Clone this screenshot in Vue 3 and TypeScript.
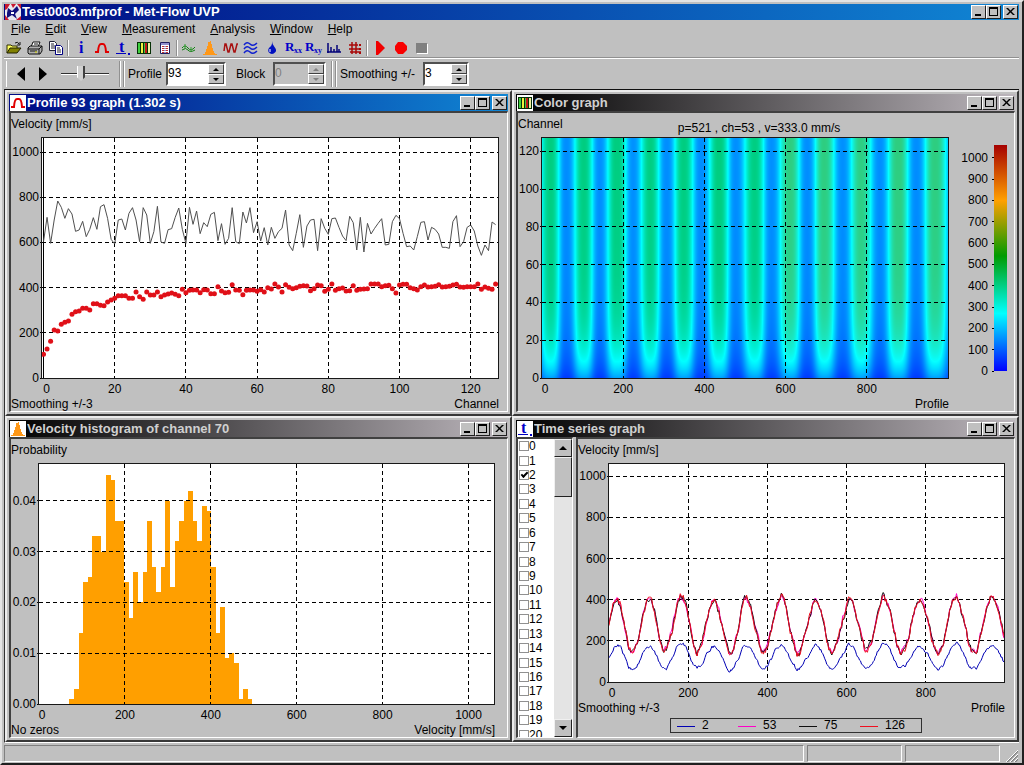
<script setup lang="ts">
import { onMounted, ref } from 'vue'

interface Tick { value: number; label: string }
interface Chart {
  kind: 'profile' | 'color' | 'histogram' | 'time'
  title: string
  icon: string
  active?: boolean
  yTitle: string
  xTitle: string
  note: string
  w: number
  h: number
  x0: number
  kx: number
  ky: number
  xTicks: Tick[]
  yTicks: Tick[]
}

const ticks = (step: number, count: number, digits = 0): Tick[] =>
  Array.from({ length: count }, (_, i) => ({ value: i * step, label: (i * step).toFixed(digits) }))

const charts: Chart[] = [
  { kind: 'profile', title: 'Profile 93 graph (1.302 s)', icon: 'profile', active: true, yTitle: 'Velocity [mm/s]', xTitle: 'Channel', note: 'Smoothing +/-3', w: 456, h: 240, x0: 1.5, kx: 3.56, ky: 0.226, xTicks: ticks(20, 7), yTicks: ticks(200, 6) },
  { kind: 'color', title: 'Color graph', icon: 'color', yTitle: 'Channel', xTitle: 'Profile', note: '', w: 406, h: 240, x0: 0, kx: 0.406, ky: 1.89, xTicks: ticks(200, 5), yTicks: ticks(20, 7) },
  { kind: 'histogram', title: 'Velocity histogram of channel 70', icon: 'hist', yTitle: 'Probability', xTitle: 'Velocity [mm/s]', note: 'No zeros', w: 455, h: 240, x0: 0, kx: 0.4295, ky: 5080, xTicks: ticks(200, 6), yTicks: ticks(0.01, 5, 2) },
  { kind: 'time', title: 'Time series graph', icon: 'time', yTitle: 'Velocity [mm/s]', xTitle: 'Profile', note: 'Smoothing +/-3', w: 395, h: 218, x0: 0, kx: 0.396, ky: 0.2058, xTicks: ticks(200, 5), yTicks: ticks(200, 6) },
]

const px = (c: Chart, v: number) => c.x0 + v * c.kx
const py = (c: Chart, v: number) => c.h - v * c.ky
const xPct = (c: Chart, v: number) => `${(px(c, v) / c.w) * 100}%`
const yPct = (c: Chart, v: number) => `${(py(c, v) / c.h) * 100}%`

/* Raw and averaged velocity per channel, as offsets in thirds of a display unit from the plot top */
const rawProfile = [335, 262, 340, 270, 213, 232, 265, 236, 252, 304, 300, 274, 320, 298, 263, 298, 230, 224, 265, 328, 342, 270, 267, 300, 250, 233, 270, 335, 233, 255, 340, 305, 229, 336, 340, 299, 296, 262, 234, 298, 340, 232, 283, 243, 311, 278, 290, 253, 247, 332, 281, 343, 325, 233, 335, 341, 246, 279, 233, 308, 275, 333, 293, 345, 292, 325, 305, 295, 240, 345, 362, 310, 254, 352, 288, 270, 268, 362, 266, 295, 313, 266, 264, 292, 318, 332, 259, 278, 360, 262, 366, 280, 312, 295, 280, 266, 345, 343, 275, 256, 266, 310, 350, 348, 360, 320, 277, 275, 330, 292, 298, 312, 352, 352, 355, 275, 257, 350, 335, 292, 285, 303, 348, 376, 345, 362, 276, 284]
const meanProfile = [673, 657, 634, 600, 603, 583, 577, 573, 553, 545, 543, 535, 535, 540, 521, 521, 526, 527, 516, 510, 505, 497, 497, 497, 505, 505, 486, 500, 508, 486, 495, 495, 486, 500, 495, 492, 489, 493, 497, 478, 488, 481, 480, 480, 488, 479, 480, 491, 491, 470, 483, 488, 487, 464, 480, 481, 494, 481, 480, 480, 484, 479, 486, 473, 477, 462, 471, 486, 464, 472, 476, 473, 469, 467, 468, 482, 476, 465, 467, 484, 478, 462, 481, 476, 474, 483, 482, 467, 481, 478, 477, 476, 462, 462, 462, 470, 467, 466, 476, 489, 465, 463, 463, 473, 476, 480, 470, 465, 471, 470, 469, 464, 471, 470, 469, 465, 463, 471, 472, 470, 470, 470, 462, 478, 471, 475, 478, 462]
const toPlot = (v: number) => v / 3 - 8
const rawPoints = rawProfile.map((v, i) => `${px(charts[0], i)},${toPlot(v)}`).join(' ')
const meanPoints = meanProfile.map((v, i) => ({ x: xPct(charts[0], i), y: `${(toPlot(v) / 240) * 100}%` }))

/* Histogram counts per thousand */
const counts = [1, 3, 14, 24, 25, 33, 33, 30, 45, 44, 36, 36, 24, 17, 26, 20, 26, 36, 27, 22, 27, 40, 23, 32, 36, 40, 42, 36, 32, 39, 38, 27, 14, 19, 9, 10, 8, 1, 3, 1]
const histogramPath = (() => {
  const c = charts[2]
  let d = `M${px(c, 71)},${c.h}`
  counts.forEach((n, i) => {
    const y = py(c, n / 1000)
    d += `L${px(c, 71 + i * 10.64)},${y}L${px(c, 71 + (i + 1) * 10.64)},${y}`
  })
  return `${d}L${px(c, 71 + counts.length * 10.64)},${c.h}Z`
})()

/* Oscillation extrema: [profile, level], level 0 = trough, 1 = crest */
const extrema: [number, number][] = [[-24, 0], [20, 1], [59, 0], [102, 1], [141, 0.03], [184, 1.04], [223, 0.04], [266, 0.98], [306, 0], [348, 1], [391, 0], [435, 1.03], [476, 0.02], [523, 0.98], [564, 0.03], [610, 1], [652, 0.01], [694, 1], [739, 0.03], [785, 0.97], [831, 0.02], [876, 1.03], [921, 0], [967, 1.01], [1015, 0.05]]
const wave = (p: number) => {
  let i = 0
  while (i < extrema.length - 2 && extrema[i + 1][0] <= p) i++
  const [a, u] = extrema[i]
  const [b, v] = extrema[i + 1]
  const t = (p - a) / (b - a)
  const s = 0.85 * (0.5 - 0.5 * Math.cos(Math.PI * t)) + 0.15 * t
  return u + (v - u) * s
}
const noise = (seed: number) => {
  let s = seed
  return () => {
    s = (s * 16807) % 2147483647
    return s / 2147483647 - 0.5
  }
}
const line = (seed: number, low: number, high: number, jitter: number, own: number) => {
  const common = noise(5150)
  const rnd = noise(seed)
  const c = charts[3]
  let drift = 0
  let extra = 0
  const out: string[] = []
  for (let p = 0; p <= 1000; p += 2.5) {
    drift = drift * 0.6 + common() * jitter
    extra = extra * 0.6 + rnd() * own
    out.push(`${px(c, p).toFixed(1)},${py(c, low + (high - low) * wave(p) + drift + extra).toFixed(1)}`)
  }
  return out.join(' ')
}
const series = [
  { name: '2', color: '#0000b4', points: line(77, 60, 180, 8, 14) },
  { name: '53', color: '#ff00c8', points: line(123457, 138, 408, 24, 20) },
  { name: '75', color: '#101010', points: line(991771, 136, 408, 24, 18) },
  { name: '126', color: '#f01020', points: line(4242421, 134, 410, 24, 18) },
]

/* Velocity colour scale */
const stops: [number, number[]][] = [[0, [0, 0, 255]], [270, [0, 255, 255]], [540, [0, 155, 0]], [800, [255, 160, 0]], [1060, [165, 0, 0]]]
const scale = (v: number) => {
  let i = 0
  while (i < stops.length - 2 && stops[i + 1][0] < v) i++
  const t = Math.max(0, (v - stops[i][0]) / (stops[i + 1][0] - stops[i][0]))
  return stops[i][1].map((a, k) => a + (stops[i + 1][1][k] - a) * t)
}
const heat = ref<HTMLCanvasElement[]>([])
onMounted(() => {
  const cv = heat.value[0]
  const ctx = cv?.getContext('2d')
  if (!cv || !ctx) return
  const img = ctx.createImageData(cv.width, cv.height)
  for (let y = 0; y < cv.height; y++) {
    const ch = ((cv.height - y) / cv.height) * 127
    const fade = 0.42 + 0.58 * (1 - Math.exp(-ch / 15))
    for (let x = 0; x < cv.width; x++) {
      const w = Math.min(1, Math.max(0, wave((x / cv.width) * 1000)))
      const level = 0.3 * w + 0.7 * w * w * (3 - 2 * w)
      const v = (140 + 255 * level) * fade + ch * 0.08
      const [r, g, b] = scale(v)
      const o = (y * cv.width + x) * 4
      img.data[o] = r + (x > 222 ? Math.max(0, v - 250) * 0.3 : 0)
      img.data[o + 1] = g
      img.data[o + 2] = b
      img.data[o + 3] = 255
    }
  }
  ctx.putImageData(img, 0, 0)
})
const legendTicks = Array.from({ length: 11 }, (_, i) => i * 100)

const menus = ['File', 'Edit', 'View', 'Measurement', 'Analysis', 'Window', 'Help']
const tools = [
  ['open', 'print', 'copy'],
  ['info', 'profile', 'time', 'color', 'table'],
  ['flow', 'hist', 'waves', 'ripple', 'drop', 'rxx', 'rxy', 'spectrum', 'grid'],
  ['play', 'record', 'stop'],
]
/* Letters drawn in the icons that have them */
const letters: Record<string, { text: string; x: number; y: number; size: string }[]> = {
  info: [{ text: 'i', x: 6, y: 13, size: 'big' }],
  time: [{ text: 't', x: 4, y: 12, size: 'big' }],
  rxx: [{ text: 'R', x: 0, y: 11, size: 'mid' }, { text: 'xx', x: 9, y: 13, size: 'small' }],
  rxy: [{ text: 'R', x: 0, y: 11, size: 'mid' }, { text: 'xy', x: 9, y: 13, size: 'small' }],
}
const captions = [
  { name: 'Minimize', d: 'M3 8h6v2h-6z' },
  { name: 'Maximize', d: 'M2 1h9v9h-9zM3 3v6h7v-6z' },
  { name: 'Close', d: 'M2 2h2l2.500 2.500l2.500 -2.500h2l-3.500 3.500l3.500 3.500h-2l-2.500 -2.500l-2.500 2.500h-2l3.500 -3.500z' },
]
const channels = Array.from({ length: 21 }, (_, i) => i)
const checked = ref<number[]>([2])
const profileNo = ref('93')
const smoothing = ref('3')
</script>

<template>
  <div class="app">
    <svg class="sprite" aria-hidden="true">
      <symbol id="ic-open" viewBox="0 0 16 16"><path d="M1 13V5h4l1 1h5v2" fill="#ffff60" stroke="#303000" /><path d="M1 13l3-5h11l-4 5z" fill="#808000" stroke="#202000" /><path d="M9 3q3-2 4 1M14 2v3h-3" fill="none" stroke="#111" /></symbol>
      <symbol id="ic-print" viewBox="0 0 16 16"><path d="M4 7l2-5h7l-2 5" fill="#fff" stroke="#111" /><path d="M1 8l2-2h12v5l-2 3H2l-1-1z" fill="#b0b0b0" stroke="#111" /><path d="M1 9h11v5M12 9l3-3M3 11h7M7 4h4" fill="none" stroke="#111" /><path d="M8 12h2" stroke="#e0e000" /></symbol>
      <symbol id="ic-copy" viewBox="0 0 16 16"><path d="M1.500 1.500h5l2 2v7h-7z" fill="#fff" stroke="#223" /><path d="M3 4h3M3 6h4M3 8h4" stroke="#223" /><path d="M7.500 5.500h5l2 2v7h-7z" fill="#fff" stroke="#000080" /><path d="M9 8h3M9 10h4M9 12h4" stroke="#223" /></symbol>
      <symbol id="ic-profile" viewBox="0 0 16 16"><path d="M1 12h3q.500-8 3-8h2q2.500 0 3 8h3" fill="none" stroke="#e00000" stroke-width="2" /></symbol>
      <symbol id="ic-time" viewBox="0 0 16 16"><path d="M1 13h10v1H1zM13 13h2v2h-2z" fill="#0000c0" /></symbol>
      <symbol id="ic-color" viewBox="0 0 16 16"><path d="M1 2h14v12H1z" fill="#063006" /><path d="M2 3h2v10H2z" fill="#40d040" /><path d="M5 3h2v10H5z" fill="#f0f040" /><path d="M8 3h1v10H8z" fill="#40c040" /><path d="M9 3h2v10H9z" fill="#c01818" /><path d="M12 3h2v10h-2z" fill="#f0f0a0" /></symbol>
      <symbol id="ic-table" viewBox="0 0 16 16"><path d="M3.500 2.500h9v11h-9z" fill="#fff" stroke="#202060" /><path d="M4 4h8" stroke="#2020a0" /><path d="M6 6v7M10 6v7" stroke="#c03030" stroke-dasharray="1 1" stroke-width="2" /><path d="M8 6v7" stroke="#2020a0" stroke-dasharray="1 1" /></symbol>
      <symbol id="ic-flow" viewBox="0 0 16 16"><path d="M1 8q3-4 6 0t7-1M1 10q4-3 6 0t7 0" fill="none" stroke="#108010" /><path d="M4 4v5M10 7v4" stroke="#30a030" /></symbol>
      <symbol id="ic-hist" viewBox="0 0 16 16"><path d="M1 15v-1h2v-2h1v-3h1v-3h1v-4h2v-1h1v3h1v4h1v3h1v2h1v1h2v1z" fill="#ff9818" /></symbol>
      <symbol id="ic-waves" viewBox="0 0 16 16"><path d="M1 11l1-7h1l2 8h1l2-8h1l2 8h1l2-8h1" fill="none" stroke="#a81010" stroke-width="1.500" /></symbol>
      <symbol id="ic-ripple" viewBox="0 0 16 16"><path d="M1 5q3-4 6-1t7-1M1 9q3-4 6-1t7-1M1 13q3-4 6-1t7-1" fill="none" stroke="#1020d0" stroke-width="1.500" /></symbol>
      <symbol id="ic-drop" viewBox="0 0 16 16"><path d="M8 1q0 3 2.500 6t1 5q-3.500 4-7 0q-1-3 1.500-5t2-6z" fill="#0010c0" /><path d="M6 9v3" stroke="#fff" /></symbol>
      <symbol id="ic-spectrum" viewBox="0 0 16 16"><path d="M2 3v10M1 12h14M5 7v5M8 9v3M11 5v7M13 9v3" fill="none" stroke="#000078" stroke-width="1.500" /></symbol>
      <symbol id="ic-grid" viewBox="0 0 16 16"><path d="M5 2v12M9 2v12M2 5h9M2 9h11M3 12h11" fill="none" stroke="#a80808" stroke-width="1.500" /><path d="M12 4h2v2h-2zM12 8h2v2h-2zM12 12h2v2h-2z" fill="#a80808" /></symbol>
      <symbol id="ic-play" viewBox="0 0 16 16"><path d="M4 1h2l7 7-7 7H4z" fill="#f00000" /></symbol>
      <symbol id="ic-record" viewBox="0 0 16 16"><path d="M5 2h5l4 4v4l-4 4H5l-3-4V6z" fill="#f80000" /></symbol>
      <symbol id="ic-stop" viewBox="0 0 16 16"><path d="M3 4h11v10H3z" fill="#fff" /><path d="M2 3h11v10H2z" fill="#808080" /></symbol>
    </svg>

    <header class="title main">
      <svg class="title-icon" viewBox="0 0 16 16" aria-hidden="true"><path d="M0 0h16v16H0z" fill="#e8e8f0" /><path d="M0 0h5l-3 5-2 1zM6 0h5L8 4zM12 0h4v5zM0 16v-5l4 5zM16 16v-4l-5 4z" fill="#c81830" /><path d="M3 4l4 3 5-5 2 4-4 4 2 5-5-4-5 3v-5z" fill="#10107c" /><path d="M6 8h3v2H6z" fill="#fff" /></svg>
      <h1>Test0003.mfprof - Met-Flow UVP</h1>
      <div class="captions">
        <button v-for="b in captions" :key="b.name" type="button" :aria-label="b.name"><svg viewBox="0 0 13 12"><path fill-rule="evenodd" :d="b.d" /></svg></button>
      </div>
    </header>

    <nav class="menu">
      <button v-for="m in menus" :key="m" type="button"><u>{{ m[0] }}</u>{{ m.slice(1) }}</button>
    </nav>

    <div class="tools">
      <div v-for="(g, i) in tools" :key="i" class="tool-group" :class="`g${i}`">
        <button v-for="t in g" :key="t" type="button" :aria-label="t">
          <svg viewBox="0 0 16 16">
            <text v-for="l in letters[t]" :key="l.text" :x="l.x" :y="l.y" class="glyph" :class="l.size">{{ l.text }}</text>
            <use :href="`#ic-${t}`" />
          </svg>
        </button>
      </div>
    </div>

    <div class="controls">
      <div class="band nav">
        <button type="button" class="arrow" aria-label="Previous profile"><svg viewBox="0 0 8 14"><path d="M8 0v14L0 7z" /></svg></button>
        <button type="button" class="arrow" aria-label="Next profile"><svg viewBox="0 0 8 14"><path d="M0 0v14l8-7z" /></svg></button>
        <input type="range" min="0" max="100" value="40" aria-label="Speed" />
      </div>
      <div class="band double">
        <label for="profile">Profile</label>
        <span class="spin wide"><input id="profile" v-model="profileNo" type="text" /><span class="steps"><button type="button" aria-label="Next"><svg viewBox="0 0 6 3"><path d="M0 3l3-3 3 3z" /></svg></button><button type="button" aria-label="Previous"><svg viewBox="0 0 6 3"><path d="M0 0l3 3 3-3z" /></svg></button></span></span>
        <label for="block" class="block-label">Block</label>
        <span class="spin off"><input id="block" type="text" value="0" disabled /><span class="steps"><button type="button" disabled aria-label="Next"><svg viewBox="0 0 6 3"><path d="M0 3l3-3 3 3z" /></svg></button><button type="button" disabled aria-label="Previous"><svg viewBox="0 0 6 3"><path d="M0 0l3 3 3-3z" /></svg></button></span></span>
      </div>
      <div class="band double last">
        <label for="smooth">Smoothing +/-</label>
        <span class="spin short"><input id="smooth" v-model="smoothing" type="text" /><span class="steps"><button type="button" aria-label="More"><svg viewBox="0 0 6 3"><path d="M0 3l3-3 3 3z" /></svg></button><button type="button" aria-label="Less"><svg viewBox="0 0 6 3"><path d="M0 0l3 3 3-3z" /></svg></button></span></span>
      </div>
    </div>

    <main class="mdi">
      <section v-for="c in charts" :key="c.kind" class="window">
        <header class="title" :class="{ active: c.active }">
          <svg class="title-icon" viewBox="0 0 16 16">
            <text v-for="l in letters[c.icon]" :key="l.text" :x="l.x" :y="l.y" class="glyph" :class="l.size">{{ l.text }}</text>
            <use :href="`#ic-${c.icon}`" />
          </svg>
          <h2>{{ c.title }}</h2>
          <div class="captions">
            <button v-for="b in captions" :key="b.name" type="button" :aria-label="b.name"><svg viewBox="0 0 13 12"><path fill-rule="evenodd" :d="b.d" /></svg></button>
          </div>
        </header>
        <div class="client">
          <div v-if="c.kind === 'time'" class="pane list">
            <div class="items">
              <label v-for="n in channels" :key="n"><input v-model="checked" type="checkbox" :value="n" /><span>{{ n }}</span></label>
            </div>
            <div class="scroll">
              <button type="button" aria-label="Scroll up"><svg viewBox="0 0 8 4"><path d="M0 4l4-4 4 4z" /></svg></button>
              <div class="thumb"></div>
              <div class="track"></div>
              <button type="button" aria-label="Scroll down"><svg viewBox="0 0 8 4"><path d="M0 0l4 4 4-4z" /></svg></button>
            </div>
          </div>

          <div class="pane chart" :class="c.kind">
            <div class="y-title">{{ c.yTitle }}</div>
            <div v-if="c.kind === 'color'" class="cursor">p=521 , ch=53 , v=333.0 mm/s</div>
            <svg class="y-axis">
              <g v-for="t in c.yTicks" :key="t.value">
                <text x="100%" :y="yPct(c, t.value)" dx="-2" dy="4" text-anchor="end">{{ t.label }}</text>
                <line x1="100%" x2="97%" :y1="yPct(c, t.value)" :y2="yPct(c, t.value)" />
              </g>
            </svg>
            <canvas v-if="c.kind === 'color'" ref="heat" class="heat" width="406" height="240"></canvas>
            <svg class="plot">
              <svg v-if="c.kind === 'histogram'" width="100%" height="100%" :viewBox="`0 0 ${c.w} ${c.h}`" preserveAspectRatio="none">
                <path :d="histogramPath" fill="#ff9f00" shape-rendering="crispEdges" />
              </svg>
              <g class="gridlines">
                <line v-for="t in c.xTicks.slice(1)" :key="`x${t.value}`" :x1="xPct(c, t.value)" :x2="xPct(c, t.value)" y1="0" y2="100%" />
                <line v-for="t in c.yTicks.slice(1)" :key="`y${t.value}`" x1="0" x2="100%" :y1="yPct(c, t.value)" :y2="yPct(c, t.value)" />
              </g>
              <template v-if="c.kind === 'profile'">
                <line class="zero" :x1="xPct(c, 0)" :x2="xPct(c, 0)" y1="0" y2="100%" />
                <svg width="100%" height="100%" :viewBox="`0 0 ${c.w} ${c.h}`" preserveAspectRatio="none">
                  <polyline class="trace" :points="rawPoints" stroke="#505050" />
                </svg>
                <circle v-for="(d, i) in meanPoints" :key="i" :cx="d.x" :cy="d.y" r="2.500" fill="#e01018" />
              </template>
              <svg v-if="c.kind === 'time'" width="100%" height="100%" :viewBox="`0 0 ${c.w} ${c.h}`" preserveAspectRatio="none">
                <polyline v-for="s in series" :key="s.name" class="trace" :points="s.points" :stroke="s.color" />
              </svg>
            </svg>
            <svg class="x-axis">
              <text v-for="t in c.xTicks" :key="t.value" :x="xPct(c, t.value)" y="14" :dx="t.value ? 0 : 3" text-anchor="middle">{{ t.label }}</text>
            </svg>
            <svg v-if="c.kind === 'color'" class="scale">
              <defs>
                <linearGradient id="velocity" x1="0" y1="1" x2="0" y2="0">
                  <stop v-for="s in stops" :key="s[0]" :offset="s[0] / 1060" :stop-color="`rgb(${s[1].join(',')})`" />
                </linearGradient>
              </defs>
              <rect x="45" y="0" width="13" height="100%" fill="url(#velocity)" />
              <g v-for="v in legendTicks" :key="v">
                <text x="39" :y="`${100 - v / 10.6}%`" dy="4" text-anchor="end">{{ v }}</text>
                <line x1="43" x2="45" :y1="`${100 - v / 10.6}%`" :y2="`${100 - v / 10.6}%`" />
              </g>
            </svg>
            <div class="footer"><span>{{ c.note }}</span><span>{{ c.xTitle }}</span></div>
            <div v-if="c.kind === 'time'" class="legend">
              <span v-for="s in series" :key="s.name"><svg><line x1="0" x2="18" y1="1" y2="1" :stroke="s.color" /></svg>{{ s.name }}</span>
            </div>
          </div>
        </div>
      </section>
    </main>

    <footer class="status">
      <div></div><div></div><div></div>
      <svg viewBox="0 0 12 12" aria-hidden="true"><path d="M1 12L12 1M5 12l7-7M9 12l3-3" stroke="#808080" stroke-width="1.500" /><path d="M0 12L12 0M4 12l8-8M8 12l4-4" stroke="#fff" /></svg>
    </footer>
  </div>
</template>

<style>
body {
  margin: 0;
  background: #c0c0c0;
}
</style>

<style scoped>
.app {
  box-sizing: border-box;
  display: flex;
  flex-direction: column;
  height: 100vh;
  min-height: 560px;
  min-width: 720px;
  padding: 2px 3px 0 2px;
  border: 2px solid #e4e4e4;
  border-right: 2px solid #202020;
  border-bottom: 2px solid #202020;
  background: #c0c0c0;
  color: #000;
  font: 12px/14px "Liberation Sans", Arial, sans-serif;
  overflow: hidden;
}
.app *, .app *::before { box-sizing: border-box; }
button, input { font: inherit; color: inherit; margin: 0; padding: 0; border: 0; background: none; border-radius: 0; outline: 0; }
svg { display: block; }
.sprite { position: absolute; width: 0; height: 0; }
.glyph { font-family: "Liberation Serif", serif; font-weight: bold; fill: #0000c8; }
.big { font-size: 16px; }
.mid { font-size: 13px; }
.small { font-size: 8px; }

.title {
  display: flex;
  flex: none;
  align-items: center;
  height: 17px;
  padding: 0 1px;
  color: #d0d0d0;
  background: linear-gradient(90deg, #000, #bcb6bc);
}
.title.active, .title.main {
  color: #fff;
  background: linear-gradient(90deg, #000a84, #1086d4);
}
.title.main { height: 16px; }
.title h1, .title h2 { flex: 1; margin: 0 0 0 1px; font-size: 13px; line-height: 16px; font-weight: bold; white-space: nowrap; overflow: hidden; }
.title-icon { flex: none; width: 16px; height: 16px; background: #fff; }
.captions { display: flex; }
.captions button {
  width: 15px;
  height: 14px;
  background: #c0c0c0;
  border: 1px solid;
  border-color: #fff #202020 #202020 #fff;
}
.captions button:last-child { margin-left: 2px; }
.captions svg { width: 13px; height: 12px; }

.menu { display: flex; flex: none; gap: 1px; height: 18px; }
.menu button { padding: 0 7px; line-height: 16px; }

.tools { display: flex; flex: none; height: 20px; border-bottom: 1px solid #909090; box-shadow: 0 1px #fff; }
.tool-group { display: flex; align-items: center; height: 19px; }
.tool-group button { display: flex; flex: 1; justify-content: center; }
.tool-group svg { width: 16px; height: 16px; overflow: visible; }
.tool-group + .tool-group::before { content: ""; width: 2px; height: 16px; margin: 0 1px; border-left: 1px solid #909090; border-right: 1px solid #fff; }
.g0 { width: 62px; }
.g1 { width: 109px; }
.g2 { width: 190px; }
.g3 { width: 68px; }

.controls { display: flex; flex: none; height: 31px; padding: 3px 0 2px 2px; }
.band { display: flex; align-items: center; border-left: 1px solid #fff; box-shadow: 1px 0 #909090; padding-right: 5px; }
.band.last { box-shadow: none; }
.band + .band { margin-left: 1px; }
.double { position: relative; padding-left: 8px; }
.double::before { content: ""; width: 2px; height: 100%; margin: 0 3px 0 -6px; border-left: 1px solid #909090; border-right: 1px solid #fff; }
.nav { width: 113px; padding-left: 10px; }
.arrow { width: 8px; height: 14px; margin-right: 14px; }
.arrow svg { width: 8px; height: 14px; }
input[type="range"] { appearance: none; width: 48px; height: 16px; }
input[type="range"]::-webkit-slider-runnable-track { height: 2px; background: #303030; border-bottom: 1px solid #fff; }
input[type="range"]::-webkit-slider-thumb {
  appearance: none;
  width: 8px;
  height: 15px;
  margin-top: -7px;
  background: linear-gradient(90deg, #fff 1px, #d0d0d0 1px 6px, #404040 6px);
  clip-path: polygon(0 0, 100% 0, 100% 75%, 50% 100%, 0 75%);
}
.double label { width: 38px; white-space: nowrap; }
.double .block-label { margin-left: 10px; width: 37px; }
.spin { display: flex; width: 53px; height: 24px; border: 2px solid; border-color: #505050 #fff #fff #505050; background: #fff; }
.spin.wide { width: 60px; }
.spin.short { width: 46px; }
.spin.off { background: #c0c0c0; color: #808080; }
.spin input { flex: 1; min-width: 0; width: 0; height: 17px; }
.steps { display: flex; flex-direction: column; width: 16px; }
.steps button { display: grid; place-content: center; flex: 1; background: #c0c0c0; border: 1px solid; border-color: #fff #404040 #404040 #fff; }
.steps svg { width: 6px; height: 3px; fill: currentColor; }
label[for="smooth"] { width: 83px; }

.mdi {
  display: grid;
  grid-template-columns: minmax(0, 1fr) minmax(0, 1fr);
  grid-template-rows: minmax(0, 1fr) minmax(0, 1fr);
  flex: 1;
  min-height: 0;
  border-top: 1px solid #101010;
  border-left: 1px solid #303030;
  border-bottom: 1px solid #fff;
}
.window {
  display: flex;
  flex-direction: column;
  min-height: 0;
  padding: 2px;
  border: 2px solid;
  border-color: #ececec #383838 #383838 #ececec;
}
.client { display: flex; flex: 1; gap: 3px; min-height: 0; }
.pane { min-height: 0; border: 2px solid; border-width: 2px 1px 1px 2px; border-color: #404040 #fff #fff #404040; }
.chart {
  display: grid;
  flex: 1;
  min-width: 0;
  grid-template-columns: 30px minmax(0, 1fr) 8px;
  grid-template-rows: 24px minmax(0, 1fr) 17px 15px;
}
.chart.color { grid-template-columns: 23px minmax(0, 1fr) 65px; }
.chart.histogram { grid-template-columns: 27px minmax(0, 1fr) 12px; }
.chart.time { grid-template-columns: 30px minmax(0, 1fr) 9px; grid-template-rows: 24px minmax(0, 1fr) 17px 18px 19px; }
.y-title { grid-area: 1 / 1 / 2 / 3; line-height: 22px; white-space: nowrap; }
.cursor { grid-area: 1 / 2 / 2 / 3; padding: 8px 0 0 28px; text-align: center; white-space: nowrap; }
.y-axis { grid-area: 2 / 1; width: 100%; height: 100%; min-height: 0; padding: 1px 0; overflow: visible; }
.plot { grid-area: 2 / 2; width: 100%; height: 100%; min-height: 0; border: 1px solid #181818; background: #fff; }
.heat { grid-area: 2 / 2; width: 100%; height: 100%; min-height: 0; padding: 1px; }
.color .plot { background: none; position: relative; }
.x-axis { grid-area: 3 / 2; width: 100%; height: 100%; padding: 0 1px; overflow: visible; }
.scale { grid-area: 2 / 3; width: 100%; height: auto; min-height: 0; margin: 8px 0; align-self: stretch; overflow: visible; }
.footer { grid-area: 4 / 1 / 5 / 3; display: flex; justify-content: space-between; line-height: 16px; }
.y-axis line, .scale line { stroke: #000; shape-rendering: crispEdges; }
.gridlines line { stroke: #000; stroke-dasharray: 4 3; shape-rendering: crispEdges; }
.zero { stroke: #000; shape-rendering: crispEdges; }
.trace { fill: none; stroke-width: 1; vector-effect: non-scaling-stroke; }
.legend { grid-area: 5 / 1 / 6 / 4; display: grid; grid-template-columns: repeat(4, 1fr); justify-self: center; width: 252px; height: 15px; padding-left: 6px; border: 1px solid #303030; }
.legend span { display: flex; align-items: center; gap: 7px; line-height: 13px; }
.legend svg { width: 18px; height: 2px; }
.legend line { shape-rendering: crispEdges; }

.list { display: flex; flex: none; width: 57px; background: #fff; overflow: hidden; }
.items { display: grid; flex: 1; grid-auto-rows: minmax(0, 1fr); height: calc(100% + 5px); }
.items label { display: flex; align-items: center; padding-left: 1px; }
.items input { appearance: none; width: 10px; height: 10px; border: 1px solid #909090; background: #fff; }
.items input:checked::before { content: ""; display: block; width: 7px; height: 4px; margin: 1px; border: solid #000; border-width: 0 0 2px 2px; transform: rotate(-45deg); }
.scroll { display: flex; flex-direction: column; width: 18px; background: #e4e4e4; }
.scroll button, .thumb { display: grid; place-content: center; height: 18px; background: #c0c0c0; border: 1px solid; border-color: #f0f0f0 #202020 #202020 #f0f0f0; }
.scroll svg { width: 8px; height: 4px; }
.thumb { height: 40px; }
.track { flex: 1; }

.status { display: flex; flex: none; height: 20px; gap: 3px; padding: 2px 0 1px; }
.status div { width: 95px; border: 1px solid; border-color: #808080 #fff #fff #808080; }
.status div:first-child { flex: 1; }
.status svg { width: 12px; height: 12px; margin: 5px 1px 0 3px; }
</style>
